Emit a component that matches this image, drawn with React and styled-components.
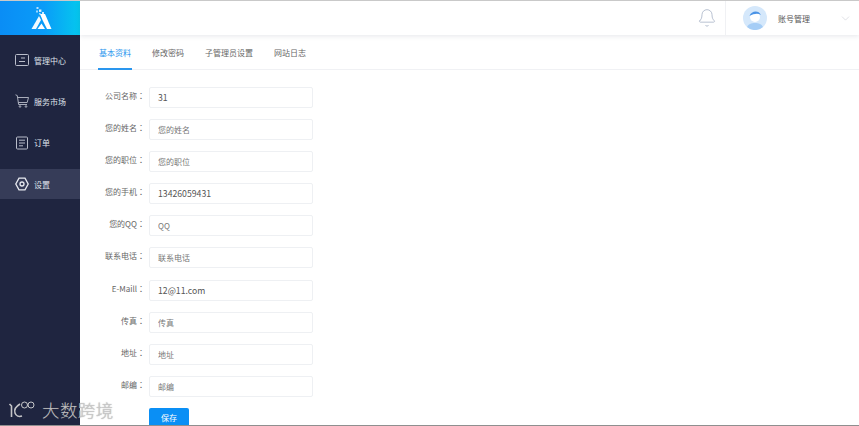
import styled, { createGlobalStyle } from 'styled-components';
import { ChevronDown, Bell } from 'lucide-react';

const Global = createGlobalStyle`
	html, body { margin: 0; padding: 0; height: 100%; overflow: hidden; background: #fff; }
	body { font-family: "Noto Sans CJK SC", "Noto Sans", sans-serif; }
	* { box-sizing: border-box; }
`;

const Page = styled.div`
	position: relative;
	width: 859px;
	height: 426px;
	display: flex;
	overflow: hidden;
	border-top: 1px solid #c9c9c9;
	border-bottom: 1px solid #8f8f8f;
`;
const Sidebar = styled.aside`
	width: 80px;
	flex: none;
	background: #1f2540;
	display: flex;
	flex-direction: column;
`;
const Logo = styled.div`
	height: 34px;
	background: linear-gradient(90deg, #0a8df5 0%, #0a9cf8 55%, #05c8ee 100%);
	display: flex;
	align-items: center;
	justify-content: center;
`;
const Nav = styled.nav`
	display: flex;
	flex-direction: column;
	padding-top: 10px;
`;
const NavItem = styled.div`
	height: 30px;
	margin-bottom: 11.4px;
	padding-left: 15px;
	display: flex;
	align-items: center;
	gap: 5px;
	font-size: 8px;
	color: #dfe2ea;
	background: ${(props) => (props.$active ? '#363c58' : 'transparent')};
	svg { flex: none; }
`;
const Main = styled.main`
	flex: 1;
	min-width: 0;
	display: flex;
	flex-direction: column;
`;
const Header = styled.header`
	height: 34px;
	flex: none;
	display: flex;
	justify-content: flex-end;
	align-items: stretch;
	box-shadow: 0 1px 5px rgba(40, 50, 80, 0.12);
	position: relative;
`;
const BellBox = styled.div`
	width: 46px;
	padding-left: 8px;
	display: flex;
	align-items: center;
	justify-content: center;
	color: #aab4c8;
	border-right: 1px solid #f0f1f4;
`;
const Account = styled.div`
	width: 133px;
	padding-left: 17px;
	display: flex;
	align-items: center;
	font-size: 8px;
	color: #555;
`;
const Avatar = styled.div`
	width: 24px;
	height: 24px;
	margin-right: 11px;
	flex: none;
`;
const AccountName = styled.span`
	width: 61px;
	white-space: nowrap;
`;
const Tabs = styled.div`
	height: 34px;
	margin-top: 1px;
	padding-left: 18px;
	flex: none;
	display: flex;
	gap: 19px;
	border-bottom: 1px solid #f0f1f4;
`;
const Tab = styled.div`
	height: 34px;
	width: ${(props) => props.$width}px;
	display: flex;
	align-items: center;
	justify-content: center;
	white-space: nowrap;
	font-size: 8px;
	color: ${(props) => (props.$active ? '#2a96ee' : '#666')};
	border-bottom: 2px solid ${(props) => (props.$active ? '#2a96ee' : 'transparent')};
`;
const Form = styled.form`
	padding-top: 17px;
	display: flex;
	flex-direction: column;
	gap: 11.1px;
`;
const Row = styled.div`
	display: flex;
	align-items: center;
	height: 21px;
`;
const Label = styled.label`
	width: 65px;
	margin-right: 4px;
	padding-bottom: 3px;
	text-align: right;
	font-size: 8px;
	line-height: 12px;
	color: #666;
	white-space: nowrap;
`;
const Colon = styled.span`
	font-family: "Noto Sans CJK TC", sans-serif;
`;
const Input = styled.input`
	width: 164px;
	height: 21px;
	padding: 0 8px;
	border: 1px solid #eef0f3;
	border-radius: 2px;
	outline: none;
	font-family: "Noto Sans CJK SC", "Noto Sans", sans-serif;
	font-size: 8.7px;
	color: #555;
	&::placeholder { color: #777; opacity: 1; font-size: 8px; }
`;
const SaveButton = styled.button`
	width: 40px;
	height: 20px;
	margin: 0 0 0 69px;
	padding: 0;
	border: none;
	border-radius: 2px;
	background: #0a8ff5;
	color: #fff;
	font-family: "Noto Sans CJK SC", sans-serif;
	font-size: 8px;
`;
const Watermark = styled.div`
	position: absolute;
	left: 8px;
	bottom: 5px;
	display: flex;
	align-items: center;
	gap: 4px;
	pointer-events: none;
`;
const WatermarkText = styled.span`
	font-size: 17.5px;
	line-height: 20px;
	letter-spacing: 0.4px;
	color: rgba(205, 205, 205, 0.9);
	font-weight: 300;
	text-shadow: 0 0 1px rgba(110, 110, 110, 0.7);
`;

const fields = [
	['公司名称', '', '31'],
	['您的姓名', '您的姓名'],
	['您的职位', '您的职位'],
	['您的手机', '', '13426059431'],
	['您的QQ', 'QQ'],
	['联系电话', '联系电话'],
	['E-Maill', '', '12@11.com'],
	['传真', '传真'],
	['地址', '地址'],
	['邮编', '邮编'],
];

const tabs = [
	['基本资料', 34, true],
	['修改密码', 34],
	['子管理员设置', 50],
	['网站日志', 34],
];

const BrandIcon = () => (
	<svg width="24" height="24" viewBox="0 0 24 24" fill="#fff">
		<path d="M12 8 L17 8 L23.5 23 L19 23 L14.5 14 Z" />
		<path d="M11 10 L13 14 L8 23 L3.5 23 Z" opacity="0.95" />
		<path d="M13.5 17.5 L17 23 L9.5 23 Z" />
		<rect x="8.5" y="1" width="2" height="2" opacity="0.7" />
		<rect x="11" y="3.5" width="2.4" height="2.4" opacity="0.85" />
		<rect x="8" y="4.5" width="2" height="2" opacity="0.6" />
		<rect x="14" y="6" width="2" height="2" opacity="0.8" />
		<rect x="11" y="7" width="1.6" height="1.6" opacity="0.6" />
	</svg>
);

const CenterIcon = () => (
	<svg width="14" height="14" viewBox="0 0 14 14" fill="none" stroke="#b9bdca" strokeWidth="1">
		<rect x="0.5" y="1.5" width="13" height="11" rx="1" />
		<path d="M6 5 H10 M4 8.5 H10" />
	</svg>
);
const CartIcon = () => (
	<svg width="14" height="14" viewBox="0 0 14 14" fill="none" stroke="#b9bdca" strokeWidth="0.9">
		<path d="M0.5 0.8 L2.3 1.6 L3.6 10.5 H12" />
		<path d="M2.6 3.5 H13.5 L12.2 8.5 H3.3" />
		<circle cx="5" cy="12.5" r="0.8" />
		<circle cx="11" cy="12.5" r="0.8" />
	</svg>
);
const OrderIcon = () => (
	<svg width="14" height="14" viewBox="0 0 14 14" fill="none" stroke="#b9bdca" strokeWidth="1">
		<rect x="1.5" y="1" width="11" height="12" rx="1" />
		<path d="M4 4.2 H10 M4 7 H10 M4 9.8 H8" />
	</svg>
);
const GearIcon = () => (
	<svg width="14" height="14" viewBox="0 0 14 14" fill="none" stroke="#e8eaf0" strokeWidth="1.3">
		<path d="M4 1.2 H10 L13.2 7 L10 12.8 H4 L0.8 7 Z" />
		<circle cx="7" cy="7" r="2" />
	</svg>
);
const AvatarIcon = () => (
	<svg width="24" height="24" viewBox="0 0 24 24">
		<circle cx="12" cy="12" r="12" fill="#d5e8fb" />
		<path d="M4 21 C6 15.5 18 15.5 20 21 A12 12 0 0 1 4 21 Z" fill="#a5cdf6" />
		<circle cx="12" cy="11" r="5" fill="#fff" />
		<path d="M6.5 10 C8 5 15.5 3.5 18 9 C15 7 11 7.5 6.5 10 Z" fill="#4a93e6" />
	</svg>
);
const WatermarkIcon = () => (
	<svg width="30" height="20" viewBox="0 0 30 20" fill="none" stroke="rgba(215,215,215,0.9)" strokeWidth="1.6">
		<path d="M1.5 4 L3.5 6 V17" />
		<path d="M12 4 C7 7 6 10 7 13 C8 16 11 17 14 16" />
		<circle cx="16.5" cy="5" r="3" strokeWidth="1" />
		<circle cx="23" cy="5" r="3" strokeWidth="1" />
	</svg>
);

const App = () => {
	return (
		<>
			<Global />
			<Page>
				<Sidebar>
					<Logo>
						<BrandIcon />
					</Logo>
					<Nav>
						<NavItem>
							<CenterIcon />
							管理中心
						</NavItem>
						<NavItem>
							<CartIcon />
							服务市场
						</NavItem>
						<NavItem>
							<OrderIcon />
							订单
						</NavItem>
						<NavItem $active>
							<GearIcon />
							设置
						</NavItem>
					</Nav>
				</Sidebar>
				<Main>
					<Header>
						<BellBox>
							<Bell size={20} strokeWidth={1} />
						</BellBox>
						<Account>
							<Avatar>
								<AvatarIcon />
							</Avatar>
							<AccountName>账号管理</AccountName>
							<ChevronDown size={13} strokeWidth={1} color="#c5c8d0" />
						</Account>
					</Header>
					<Tabs>
						{tabs.map(([name, width, active]) => (
							<Tab key={name} $width={width} $active={active}>
								{name}
							</Tab>
						))}
					</Tabs>
					<Form>
						{fields.map(([label, placeholder, value]) => (
							<Row key={label}>
								<Label>
									{label}
									<Colon>：</Colon>
								</Label>
								<Input placeholder={placeholder} defaultValue={value} />
							</Row>
						))}
						<SaveButton type="button">保存</SaveButton>
					</Form>
				</Main>
				<Watermark>
					<WatermarkIcon />
					<WatermarkText>大数跨境</WatermarkText>
				</Watermark>
			</Page>
		</>
	);
};

export default App;
